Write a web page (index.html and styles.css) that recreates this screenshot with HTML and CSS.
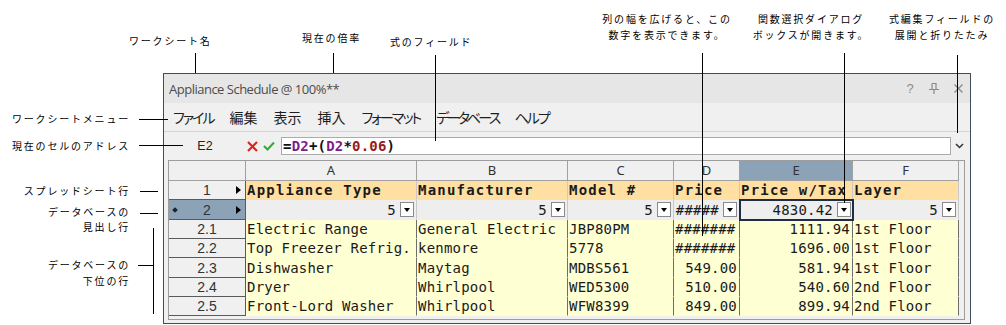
FILE: index.html
```html
<!DOCTYPE html>
<html lang="ja">
<head>
  <meta charset="UTF-8">
  <title>ワークシートの各部</title>
  <link rel="stylesheet" href="styles.css">
</head>
<body>

  <div class="window">
    <div class="titlebar">
      <span class="title">Appliance Schedule @ 100%**</span>
      <span class="tbtn">?</span>
      <span class="tbtn">
        <svg width="10" height="11" viewBox="0 0 10 11"><path d="M0 6.5H10M3 0.5H7V6.5M3 0.5V6.5M5 6.5V11" fill="none" stroke="#8a8a8a" stroke-width="1.2"/></svg>
      </span>
      <span class="tbtn">
        <svg width="9" height="9" viewBox="0 0 9 9"><path d="M0.5 0.5L8.5 8.5M8.5 0.5L0.5 8.5" stroke="#8a8a8a" stroke-width="1.3"/></svg>
      </span>
    </div>

    <div class="menubar">
      <span class="kana">ファイル</span>
      <span>編集</span>
      <span>表示</span>
      <span>挿入</span>
      <span class="kana">フォーマット</span>
      <span class="kana wide">データベース</span>
      <span class="kana">ヘルプ</span>
    </div>

    <div class="formulabar">
      <div class="namebox">E2</div>
      <svg class="fx-cancel" width="11" height="11" viewBox="0 0 11 11"><path d="M1 1L10 10M10 1L1 10" stroke="#e5211c" stroke-width="2.2"/></svg>
      <svg class="fx-ok" width="12" height="10" viewBox="0 0 12 10"><path d="M1 5L4.5 8.5L11 1.5" fill="none" stroke="#2fae2f" stroke-width="2"/></svg>
      <div class="formula">=<b class="ref">D2</b>+(<b class="ref">D2</b>*<b class="num">0.06</b>)</div>
      <svg class="expand" width="9" height="6" viewBox="0 0 9 6"><path d="M1 1L4.5 4.5L8 1" fill="none" stroke="#333" stroke-width="1.5"/></svg>
    </div>

    <div class="sheet">
      <div class="grid">
        <!-- 列見出し -->
        <div class="ch"></div>
        <div class="ch">A</div>
        <div class="ch">B</div>
        <div class="ch">C</div>
        <div class="ch">D</div>
        <div class="ch ch-sel">E</div>
        <div class="ch">F</div>

        <!-- スプレッドシート行 -->
        <div class="rh"><span></span><span>1</span><i class="arrow"></i></div>
        <div class="c r1">Appliance Type</div>
        <div class="c r1">Manufacturer</div>
        <div class="c r1">Model #</div>
        <div class="c r1">Price</div>
        <div class="c r1">Price w/Tax</div>
        <div class="c r1">Layer</div>

        <!-- データベースの見出し行 -->
        <div class="rh rh-sel"><i class="dot"></i><span>2</span><i class="arrow"></i></div>
        <div class="c r2"><span>5</span><i class="dd"></i></div>
        <div class="c r2"><span>5</span><i class="dd"></i></div>
        <div class="c r2"><span>5</span><i class="dd"></i></div>
        <div class="c r2"><span>#####</span><i class="dd"></i></div>
        <div class="c r2 sel"><span>4830.42</span><i class="dd"></i></div>
        <div class="c r2"><span>5</span><i class="dd"></i></div>

        <!-- データベースの下位の行 -->
        <div class="rh"><span></span><span>2.1</span><span></span></div>
        <div class="c rd">Electric Range</div>
        <div class="c rd">General Electric</div>
        <div class="c rd">JBP80PM</div>
        <div class="c rd">#######</div>
        <div class="c rd num">1111.94</div>
        <div class="c rd">1st Floor</div>

        <div class="rh"><span></span><span>2.2</span><span></span></div>
        <div class="c rd">Top Freezer Refrig.</div>
        <div class="c rd">kenmore</div>
        <div class="c rd">5778</div>
        <div class="c rd">#######</div>
        <div class="c rd num">1696.00</div>
        <div class="c rd">1st Floor</div>

        <div class="rh"><span></span><span>2.3</span><span></span></div>
        <div class="c rd">Dishwasher</div>
        <div class="c rd">Maytag</div>
        <div class="c rd">MDBS561</div>
        <div class="c rd num">549.00</div>
        <div class="c rd num">581.94</div>
        <div class="c rd">1st Floor</div>

        <div class="rh"><span></span><span>2.4</span><span></span></div>
        <div class="c rd">Dryer</div>
        <div class="c rd">Whirlpool</div>
        <div class="c rd">WED5300</div>
        <div class="c rd num">510.00</div>
        <div class="c rd num">540.60</div>
        <div class="c rd">2nd Floor</div>

        <div class="rh"><span></span><span>2.5</span><span></span></div>
        <div class="c rd">Front-Lord Washer</div>
        <div class="c rd">Whirlpool</div>
        <div class="c rd">WFW8399</div>
        <div class="c rd num">849.00</div>
        <div class="c rd num">899.94</div>
        <div class="c rd">2nd Floor</div>
      </div>
    </div>
  </div>

  <!-- 説明ラベルと引き出し線 -->
  <div class="note n-name">ワークシート名</div>
  <div class="note n-zoom">現在の倍率</div>
  <div class="note n-formula">式のフィールド</div>
  <div class="note n-width">列の幅を広げると、この<br>数字を表示できます。</div>
  <div class="note n-func">関数選択ダイアログ<br>ボックスが開きます。</div>
  <div class="note n-expand">式編集フィールドの<br>展開と折りたたみ</div>

  <div class="note n-left n-menu">ワークシートメニュー</div>
  <div class="note n-left n-addr">現在のセルのアドレス</div>
  <div class="note n-left n-row">スプレッドシート行</div>
  <div class="note n-left n-dbhead">データベースの<br>見出し行</div>
  <div class="note n-left n-dbsub">データベースの<br>下位の行</div>

  <div class="ln v l-name"></div>
  <div class="ln v l-zoom"></div>
  <div class="ln v l-formula"></div>
  <div class="ln v l-width"></div>
  <div class="ln v l-func"></div>
  <div class="ln v l-expand"></div>
  <div class="ln h l-menu"></div>
  <div class="ln h l-addr"></div>
  <div class="ln h l-row"></div>
  <div class="ln h l-dbhead"></div>
  <div class="ln v l-bracket"></div>
  <div class="ln h l-dbsub"></div>

</body>
</html>
```

FILE: styles.css
```css
body {
  margin: 0;
  padding: 73px 0 0 163px;
  width: 1006px;
  height: 325px;
  box-sizing: border-box;
  overflow: hidden;
  position: relative;
  background: #fff;
  font-family: "Noto Sans", "Noto Sans CJK JP", sans-serif;
}

/* === ウィンドウ === */
.window {
  width: 808px;
  height: 251px;
  box-sizing: border-box;
  border: 1px solid #3f4d59;
  background: #f0f0f0;
  display: flex;
  flex-direction: column;
}

.titlebar {
  height: 29px;
  flex: none;
  background: #e6e6e6;
  display: flex;
  align-items: center;
  padding-left: 5px;
}

.title {
  flex: 1;
  font-family: "Open Sans", sans-serif;
  font-size: 13px;
  letter-spacing: -0.5px;
  color: #4d4d4d;
}

.tbtn {
  width: 24px;
  display: flex;
  justify-content: center;
  align-items: center;
  font-family: "Liberation Sans", sans-serif;
  font-size: 13px;
  color: #8a8a8a;
}

.menubar {
  height: 28px;
  flex: none;
  display: flex;
  align-items: center;
  gap: 16px;
  padding-left: 9px;
  border-bottom: 1px solid #d5d5d5;
  font-family: "Noto Sans CJK JP", sans-serif;
  font-size: 14px;
  font-feature-settings: "palt";
  color: #1e1e1e;
}

.menubar .kana { letter-spacing: -2px; }
.menubar .wide { letter-spacing: -2.8px; }

/* === 式バー === */
.formulabar {
  height: 28px;
  flex: none;
  display: flex;
  align-items: center;
}

.namebox {
  width: 82px;
  text-align: center;
  font-family: "Liberation Sans", sans-serif;
  font-size: 12.5px;
  color: #222;
}

.fx-cancel { margin-left: 1px; }
.fx-ok { margin-left: 5px; }

.formula {
  margin-left: 6px;
  width: 670px;
  height: 18px;
  box-sizing: border-box;
  border: 1px solid #ababab;
  background: #fff;
  padding-left: 1px;
  font-family: "DejaVu Sans Mono", monospace;
  font-size: 14px;
  font-weight: bold;
  letter-spacing: 0.2px;
  line-height: 16px;
  color: #111;
}

.formula .ref { color: #7d1a8a; }
.formula .num { color: #9a1b1b; }

.expand { margin-left: 4px; }

/* === シート === */
.sheet {
  margin-left: 4px;
  width: 797px;
  height: 160px;
  flex: none;
  box-sizing: border-box;
  border: 1px solid #9c9c9c;
  background: #f0f0f0;
}

.grid {
  display: grid;
  grid-template-columns: 77px 171px 151px 106px 66px 113px 106px;
  grid-template-rows: 20px 19px 20px 19px 19px 20px 19px 19px;
}

.grid > div {
  box-sizing: border-box;
  border-right: 1px solid #a0a0a0;
  border-bottom: 1px solid #a0a0a0;
}

.ch {
  background: #f0f0f0;
  text-align: center;
  font-family: "Noto Sans", sans-serif;
  font-size: 13px;
  line-height: 19px;
  color: #333;
}

.ch-sel { background: #8ca2b6; }

.grid > .rh {
  display: grid;
  grid-template-columns: 12px 1fr 12px;
  align-items: center;
  background: #f0f0f0;
  border-right-color: #5a5a5a;
  border-bottom-color: #5a5a5a;
  font-family: "Liberation Sans", sans-serif;
  font-size: 14px;
  color: #333;
  text-align: center;
}

.grid > .rh-sel { background: #8ca2b6; }

.arrow {
  justify-self: end;
  margin-right: 4px;
  width: 0;
  height: 0;
  border-top: 4px solid transparent;
  border-bottom: 4px solid transparent;
  border-left: 5px solid #000;
}

.dot {
  justify-self: center;
  width: 4px;
  height: 4px;
  background: #222;
  transform: rotate(45deg);
}

.c {
  padding: 0 2px 0 1px;
  font-family: "DejaVu Sans Mono", monospace;
  font-size: 14px;
  letter-spacing: 0.2px;
  color: #1a1a1a;
  white-space: nowrap;
  overflow: hidden;
  display: flex;
  align-items: center;
}

.grid > .r1 {
  background: #ffe0a2;
  border-right-color: #c9c9c9;
  border-bottom-color: #ffe0a2;
  font-weight: bold;
  letter-spacing: 1.2px;
}

.grid > .r2 {
  background: #eeeeee;
  border-right-color: #c9c9c9;
  border-bottom-color: #eeeeee;
  justify-content: flex-end;
  padding-right: 2px;
}

.grid > .rd {
  background: #ffffd4;
  border-right-color: #6e6e6e;
  border-bottom-color: #ffffd4;
}

.rd.num { justify-content: flex-end; }

.grid > .sel {
  outline: 2px solid #1f2c46;
  outline-offset: -1px;
  position: relative;
  z-index: 1;
  padding-right: 1px;
}

.dd {
  margin-left: 4px;
  width: 14px;
  height: 15px;
  box-sizing: border-box;
  border: 1px solid #8a8a8a;
  background: #fff;
  display: flex;
  justify-content: center;
  align-items: center;
}

.dd::after {
  content: "";
  border-top: 4px solid #000;
  border-left: 3.5px solid transparent;
  border-right: 3.5px solid transparent;
}

/* === 説明ラベル === */
.note {
  position: absolute;
  font-family: "Noto Sans CJK JP", sans-serif;
  font-size: 10px;
  letter-spacing: 1.8px;
  line-height: 16px;
  color: #000;
  white-space: nowrap;
}

.n-name { left: 129px; top: 33px; }
.n-zoom { left: 302px; top: 30px; }
.n-formula { left: 390px; top: 34px; }
.n-width { left: 596px; top: 11px; width: 142px; text-align: center; }
.n-func { left: 751px; top: 11px; width: 120px; text-align: center; }
.n-expand { left: 882px; top: 11px; width: 120px; text-align: center; }

.n-left { left: 0; width: 130px; text-align: right; }
.n-menu { top: 111px; }
.n-addr { top: 138px; }
.n-row { top: 183px; }
.n-dbhead { top: 204px; line-height: 15px; }
.n-dbsub { top: 257px; }

.ln {
  position: absolute;
  background: #000;
  z-index: 5;
}

.ln.v { width: 1px; }
.ln.h { height: 1px; }

.l-name { left: 195px; top: 53px; height: 20px; }
.l-zoom { left: 333px; top: 53px; height: 20px; }
.l-formula { left: 435px; top: 55px; height: 86px; }
.l-width { left: 702px; top: 53px; height: 183px; }
.l-func { left: 844px; top: 53px; height: 150px; }
.l-expand { left: 957px; top: 55px; height: 78px; }
.l-menu { left: 139px; top: 119px; width: 29px; }
.l-addr { left: 139px; top: 145px; width: 44px; }
.l-row { left: 140px; top: 191px; width: 18px; }
.l-dbhead { left: 140px; top: 213px; width: 18px; }
.l-bracket { left: 153px; top: 228px; height: 86px; }
.l-dbsub { left: 138px; top: 265px; width: 15px; }
```
